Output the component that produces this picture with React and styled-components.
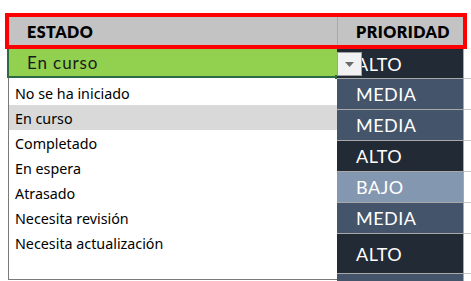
import React from 'react'
import styled, { createGlobalStyle } from 'styled-components'

const GlobalStyle = createGlobalStyle`
  html, body {
    margin: 0;
    padding: 0;
    background: #ffffff;
  }
  body {
    font-family: 'Lato', 'Liberation Sans', sans-serif;
  }
`

const estados = [
  'No se ha iniciado',
  'En curso',
  'Completado',
  'En espera',
  'Atrasado',
  'Necesita revisión',
  'Necesita actualización',
]

const prioridades = [
  { label: 'ALTO', h: 29 },
  { label: 'MEDIA', h: 30 },
  { label: 'MEDIA', h: 30 },
  { label: 'ALTO', h: 30 },
  { label: 'BAJO', h: 30 },
  { label: 'MEDIA', h: 30 },
  { label: 'ALTO', h: 39 },
  { label: '', level: 'MEDIA', h: 20 },
]

const levelColors = {
  ALTO: '#222a35',
  MEDIA: '#44546a',
  BAJO: '#8497b0',
}

export default function App() {
  return (
    <>
      <GlobalStyle />
      <Page>
        <Header>
          <HeaderCell>ESTADO</HeaderCell>
          <HeaderCell $divider>PRIORIDAD</HeaderCell>
        </Header>
        <Body>
          <StatusColumn>
            <SelectedCell>
              En curso
              <FillHandle />
            </SelectedCell>
            <OptionList>
              {estados.map((e) => (
                <Option key={e} $active={e === 'En curso'}>{e}</Option>
              ))}
            </OptionList>
          </StatusColumn>
          <PriorityColumn>
            <DropButton>
              <svg width="9" height="5" viewBox="0 0 9 5">
                <path d="M0 0 L9 0 L4.5 5 Z" fill="#6b6b6b" />
              </svg>
            </DropButton>
            {prioridades.map((p, i) => (
              <PriorityCell key={i} $level={p.level || p.label} $h={p.h}>{p.label}</PriorityCell>
            ))}
          </PriorityColumn>
          <Filler>
            {prioridades.map((p, i) => (
              <FillerCell key={i} $h={p.h} />
            ))}
          </Filler>
        </Body>
      </Page>
    </>
  )
}

const Page = styled.div`
  width: 471px;
  height: 281px;
  overflow: hidden;
  padding: 13px 0 0 5px;
  box-sizing: border-box;
`

const Header = styled.div`
  width: 462px;
  height: 36px;
  box-sizing: border-box;
  border: 4px solid #ff0000;
  display: grid;
  grid-template-columns: 328px 1fr;
`

const HeaderCell = styled.div`
  background: #c3c3c3;
  display: flex;
  align-items: center;
  padding-left: 18px;
  border-left: ${({ $divider }) => ($divider ? '1px solid #a9a9a9' : 'none')};
  font-weight: 800;
  font-size: 16px;
  letter-spacing: 0.5px;
  color: #000;
`

const Body = styled.div`
  margin-left: 2px;
  display: grid;
  grid-template-columns: 330px 127px 1fr;
`

const StatusColumn = styled.div`
  display: flex;
  flex-direction: column;
`

const SelectedCell = styled.div`
  position: relative;
  height: 29px;
  box-sizing: border-box;
  background: #92d050;
  border-left: 2px solid #2e6b45;
  border-bottom: 2px solid #2e6b45;
  padding-left: 18px;
  display: flex;
  align-items: center;
  font-size: 17px;
  letter-spacing: 0.9px;
  color: #1a1a1a;
`

const FillHandle = styled.span`
  position: absolute;
  right: -2px;
  bottom: -3px;
  width: 4px;
  height: 4px;
  background: #2e6b45;
`

const OptionList = styled.div`
  margin-left: 1px;
  height: 202px;
  box-sizing: border-box;
  border-left: 1px solid #7a7a7a;
  border-bottom: 1px solid #7a7a7a;
  padding-top: 2px;
  display: flex;
  flex-direction: column;
  font-family: 'Noto Sans', 'Open Sans', sans-serif;
`

const Option = styled.div`
  height: 25px;
  display: flex;
  align-items: center;
  padding: 1px 0 0 6px;
  box-sizing: border-box;
  font-size: 14.3px;
  color: #000;
  background: ${({ $active }) => ($active ? '#d9d9d9' : 'transparent')};
`

const PriorityColumn = styled.div`
  position: relative;
  display: flex;
  flex-direction: column;
  border-right: 1px solid #a9a9a9;
`

const PriorityCell = styled.div`
  height: ${({ $h }) => $h}px;
  flex-shrink: 0;
  border-bottom: 1px solid #a9a9a9;
  background: ${({ $level }) => levelColors[$level]};
  color: #ffffff;
  display: flex;
  align-items: center;
  padding-left: 19px;
  font-size: 18px;
  letter-spacing: 0.5px;
`

const DropButton = styled.div`
  position: absolute;
  left: 0;
  top: 3px;
  width: 25px;
  height: 24px;
  box-sizing: border-box;
  background: #f2f2f2;
  border: 1px solid #a0a0a0;
  display: flex;
  align-items: center;
  justify-content: center;
`

const Filler = styled.div`
  display: flex;
  flex-direction: column;
`

const FillerCell = styled.div`
  height: ${({ $h }) => $h}px;
  flex-shrink: 0;
  border-bottom: 1px solid #c8c8c8;
`
